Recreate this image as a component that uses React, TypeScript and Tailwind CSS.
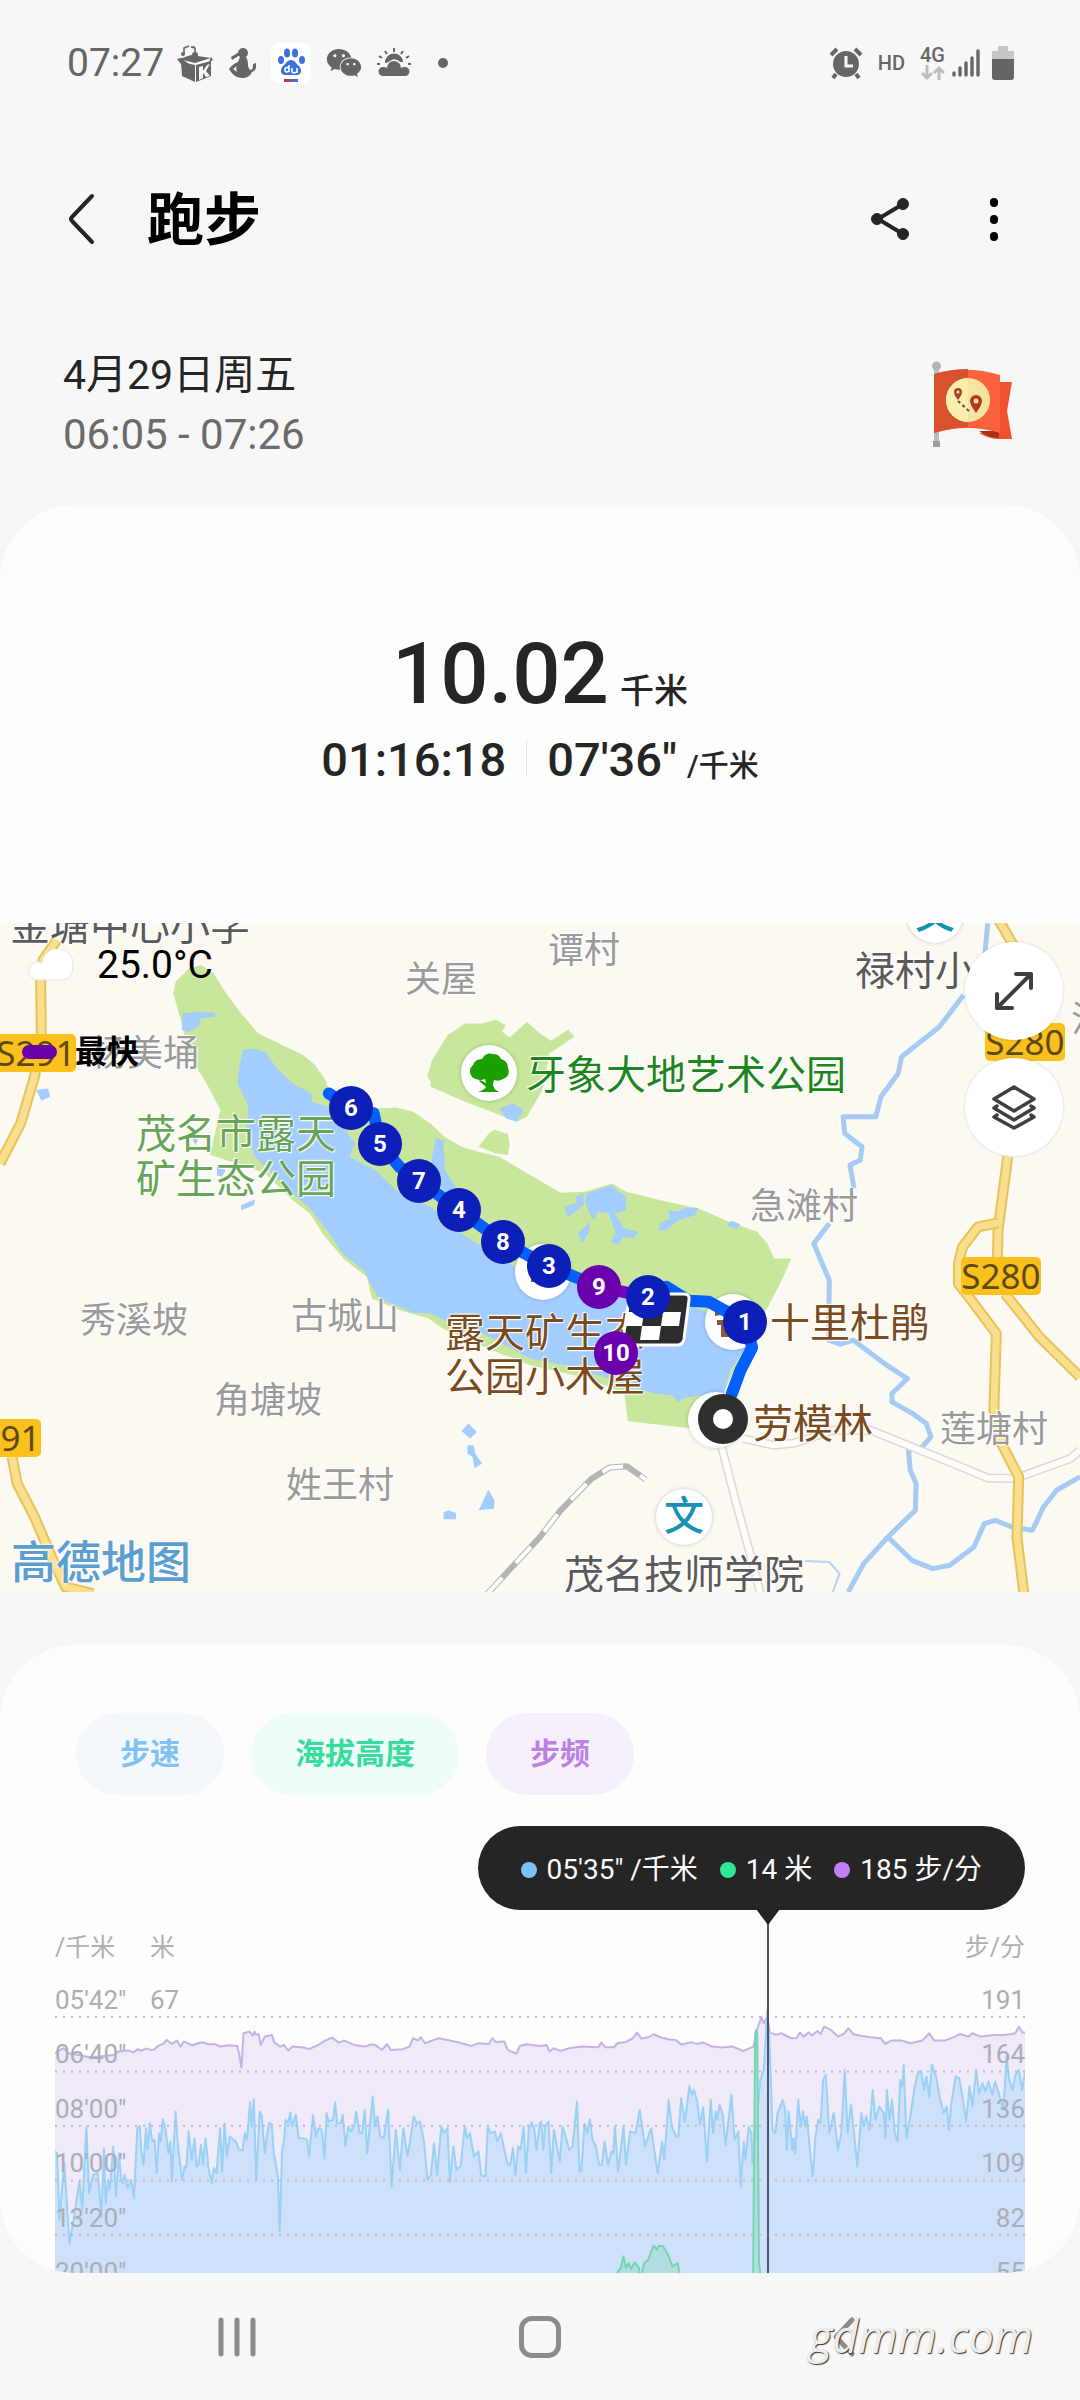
import { FaWeixin } from "react-icons/fa"

const UI_FONT = "font-['Roboto','Noto_Sans_CJK_SC',sans-serif]"

/* ---------- map data ---------- */

const labelTone = {
  village: "text-[36px] text-[#9a9a9a]",
  school: "text-[40px] text-[#5a5a5a]",
  park: "text-[40px] text-[#68a557]",
  garden: "text-[40px] text-[#1d851d]",
  poi: "text-[40px] text-[#7a4a20]",
}

const mapLabels: { text: string; x: number; y: number; tone: keyof typeof labelTone }[] = [
  { text: "金塘中心小学", x: 10, y: 2, tone: "school" },
  { text: "关屋", x: 405, y: 55, tone: "village" },
  { text: "谭村", x: 548, y: 26, tone: "village" },
  { text: "禄村小", x: 855, y: 47, tone: "school" },
  { text: "杨美埇", x: 91, y: 129, tone: "village" },
  { text: "洪", x: 1071, y: 95, tone: "village" },
  { text: "牙象大地艺术公园", x: 526, y: 151, tone: "garden" },
  { text: "茂名市露天", x: 136, y: 210, tone: "park" },
  { text: "矿生态公园", x: 136, y: 255, tone: "park" },
  { text: "急滩村", x: 750, y: 282, tone: "village" },
  { text: "秀溪坡", x: 80, y: 396, tone: "village" },
  { text: "古城山", x: 291, y: 392, tone: "village" },
  { text: "角塘坡", x: 214, y: 476, tone: "village" },
  { text: "姓王村", x: 286, y: 561, tone: "village" },
  { text: "露天矿生态", x: 445, y: 409, tone: "poi" },
  { text: "公园小木屋", x: 445, y: 453, tone: "poi" },
  { text: "十里杜鹃", x: 770, y: 399, tone: "poi" },
  { text: "劳模林", x: 753, y: 500, tone: "poi" },
  { text: "莲塘村", x: 940, y: 505, tone: "village" },
  { text: "茂名技师学院", x: 564, y: 651, tone: "school" },
]

const roadBadges = [
  { text: "S291", x: 36, y: 130 },
  { text: "S280", x: 1025, y: 119 },
  { text: "S280", x: 1001, y: 353 },
  { text: "S291", x: 1, y: 515 },
]

const kmMarkers = [
  { km: 3, x: 549, y: 343 },
  { km: 8, x: 503, y: 319 },
  { km: 4, x: 459, y: 287 },
  { km: 7, x: 419, y: 258 },
  { km: 5, x: 380, y: 221 },
  { km: 6, x: 351, y: 185 },
  { km: 9, x: 599, y: 364, fast: true },
  { km: 2, x: 648, y: 374 },
  { km: 1, x: 745, y: 399 },
  { km: 10, x: 616, y: 430, fast: true },
]

const greens = [
  "503,250 510,215 550,175 585,165 620,190 650,240 700,310 750,370 830,410 880,435 915,465 945,510 960,560 1000,580 1095,595 1150,592 1200,605 1250,640 1290,680 1340,710 1390,725 1450,740 1568,812 1628,848 1698,845 1778,820 1818,845 1918,870 2028,895 2118,935 2198,965 2228,1000 2248,1045 2298,1045 2270,1110 2230,1190 2170,1290 2100,1450 2080,1550 1998,1553 1823,1533 1813,1450 1770,1430 1690,1400 1540,1365 1430,1320 1285,1255 1245,1225 1160,1200 1080,1165 1065,1100 1000,1048 940,975 900,910 850,870 770,790 720,770 610,735 640,600 600,520 570,470 540,400 525,330",
  "1240,500 1255,450 1300,375 1350,340 1400,340 1440,328 1468,345 1458,365 1480,382 1530,335 1568,370 1600,392 1650,358 1668,380 1595,430 1575,540 1530,620 1500,635 1440,610 1350,575 1250,530 1250,512",
  "1418,672 1435,658 1475,672 1480,705 1475,735 1440,730 1390,710",
]

const waters = [
  "705,420 730,415 770,425 800,470 850,520 905,550 905,575 950,590 990,640 1030,700 1015,740 1090,780 1150,840 1250,890 1340,970 1460,1050 1568,1110 1640,1110 1740,1150 1818,1165 2008,1190 2180,1240 2168,1310 2120,1380 2100,1460 2040,1455 1980,1465 1970,1475 1950,1455 1900,1450 1820,1425 1668,1370 1540,1345 1440,1290 1400,1270 1290,1230 1250,1210 1200,1208 1100,1165 1075,1120 1060,1085 995,1030 950,960 900,895 850,850 790,790 740,740 715,660 722,590 690,520 695,470",
  "530,310 575,305 625,308 625,320 582,325 578,350 545,366 528,358",
  "105,540 140,535 146,560 120,571",
  "555,680 580,675 568,706",
  "630,770 655,780 645,800 630,795",
  "700,885 740,868 738,885 700,900",
  "1265,685 1288,690 1292,780 1325,835 1295,850 1250,790 1255,740",
  "1450,595 1490,580 1520,600 1500,635 1470,625",
  "1703,850 1773,825 1818,860 1818,900 1785,910 1813,955 1853,965 1840,985 1810,980 1795,1003 1773,995 1788,970 1768,910 1735,905 1725,930 1715,915 1700,880",
  "1638,890 1675,878 1672,858 1695,850 1695,885 1650,920",
  "1678,970 1713,935 1713,960 1690,1000",
  "1940,900 1965,905 1990,893 2028,893 2018,915 1968,930 1935,960 1912,962 1918,938 1945,925",
  "2112,945 2125,932 2150,942 2138,957",
  "1340,1562 1360,1540 1385,1565 1365,1585",
  "1357,1605 1375,1605 1380,1630 1400,1660 1378,1674 1372,1640 1357,1630",
  "1418,1738 1436,1770 1434,1795 1390,1800",
  "1288,1806 1302,1800 1324,1808 1324,1827 1288,1827",
]

const rivers = [
  "2868,40 2860,130",
  "2798,255 2728,350 2618,440 2608,490 2558,560 2543,620 2448,620 2453,670 2503,710 2498,750 2468,765 2480,835",
  "2408,940 2363,1000 2383,1050 2408,1110 2406,1290 2440,1302 2478,1290 2568,1360 2635,1405 2590,1450 2590,1475 2650,1510 2690,1540 2703,1580 2678,1610 2638,1620 2643,1680 2660,1720 2658,1800 2578,1880 2508,1960 2463,2045",
  "2578,1880 2648,1950 2708,1975 2758,1965 2828,1910 2858,1840 2890,1830 2938,1850 2998,1860 3030,1790 3068,1740 3136,1700",
]

const yellowRoads = [
  "165,90 125,150 118,210 120,380 100,500 60,640 0,760",
  "35,1640 50,1720 100,1820 150,1940 190,2030 270,2050",
  "2900,30 2945,110",
  "2926,740 2898,960 2896,1060",
  "2898,938 2840,950 2795,1010 2783,1060 2783,1120 2813,1160 2893,1270 2886,1500 2908,1600 2958,1700 2953,1880 2973,2050",
  "2918,1150 3018,1280 3136,1400",
]

const whiteRoads = [
  "2158,1585 2248,1605 2308,1598 2420,1560 2528,1560 2648,1610 2768,1660 2868,1703 2948,1705 3108,1645 3136,1620",
  "2093,1600 2138,1780 2178,1930 2208,2050",
]

const railway = "1415,2050 1568,1880 1628,1800 1718,1705 1770,1672 1820,1668 1875,1708"
const route =
  "955,550 1020,594 1085,610 1104,702 1160,770 1218,812 1333,900 1461,995 1593,1068 1740,1130"
const routeEnd = "1883,1145 1935,1130 2000,1172 2058,1175 2164,1235 2184,1312 2150,1380 2125,1450"

/* ---------- chart data ---------- */

const cadence =
  "161,400 185,385 200,400 230,405 260,412 290,410 330,405 345,395 370,392 390,397 400,388 412,392 425,386 440,390 450,388 460,378 475,372 485,360 500,372 515,362 525,380 535,365 560,376 575,370 590,368 610,374 625,372 640,380 665,376 690,378 695,400 702,443 708,340 725,335 735,347 740,335 745,345 752,342 758,375 770,350 790,345 798,368 815,380 825,375 838,392 850,380 880,383 900,387 925,375 945,362 965,353 985,368 1000,362 1030,375 1060,380 1075,374 1090,375 1110,390 1125,372 1135,390 1170,388 1190,380 1200,355 1215,362 1222,352 1235,370 1255,362 1275,355 1300,360 1330,367 1370,378 1390,370 1420,372 1430,355 1440,366 1465,365 1475,390 1500,402 1510,378 1530,373 1568,378 1588,375 1596,395 1608,385 1628,393 1653,385 1688,380 1738,382 1746,368 1758,382 1783,382 1793,370 1818,366 1838,355 1850,338 1863,356 1883,352 1898,343 1918,352 1943,359 1963,360 1978,374 2008,367 2023,372 2043,368 2068,380 2098,383 2128,380 2158,393 2188,380 2198,330 2211,292 2218,310 2228,290 2236,338 2253,345 2268,340 2298,355 2313,355 2323,338 2333,350 2348,338 2358,347 2373,333 2383,342 2393,320 2413,330 2433,350 2450,342 2463,325 2478,343 2503,348 2528,352 2558,355 2570,372 2588,362 2618,362 2643,370 2678,362 2698,340 2713,362 2743,362 2773,350 2788,342 2813,350 2823,340 2848,350 2888,345 2918,345 2948,340 2958,320 2968,338 2976,338"

const pace =
  "161,695 167,700 174,900 188,730 203,972 215,900 232,785 240,870 252,622 260,820 272,765 285,760 296,890 303,685 308,850 315,780 320,810 330,680 338,830 347,700 352,770 358,790 363,765 372,805 382,780 390,835 400,625 407,618 412,700 418,735 425,625 430,690 436,610 443,665 450,660 456,760 463,640 468,665 474,598 482,630 490,700 496,665 500,785 511,575 518,680 530,780 537,740 542,745 549,635 558,720 566,655 572,740 577,735 585,675 590,735 598,655 607,750 616,790 622,745 630,760 640,625 646,755 653,610 660,710 668,650 685,665 695,690 705,692 712,640 718,660 727,548 732,620 738,540 745,780 755,575 761,590 770,700 776,650 782,610 790,612 796,700 808,770 813,935 820,695 826,660 830,600 838,610 844,578 849,620 860,585 868,655 880,655 892,660 898,710 910,585 918,650 925,625 935,630 943,715 949,580 955,605 968,600 974,548 980,610 990,610 996,585 1004,680 1012,620 1020,635 1030,615 1035,575 1045,640 1052,640 1060,570 1067,700 1083,530 1090,620 1097,590 1105,650 1115,655 1128,570 1138,800 1150,630 1162,750 1172,625 1184,710 1192,660 1202,590 1212,612 1220,605 1232,665 1242,780 1252,765 1261,670 1270,765 1282,620 1290,640 1300,625 1307,785 1317,680 1326,750 1338,740 1350,620 1357,655 1365,640 1377,710 1390,695 1398,768 1410,770 1417,620 1425,640 1437,635 1445,665 1455,640 1465,690 1475,735 1482,735 1490,685 1497,765 1505,680 1512,690 1521,620 1528,760 1536,625 1545,608 1552,630 1558,690 1568,610 1572,605 1578,690 1583,620 1593,605 1601,760 1609,630 1626,725 1634,620 1643,650 1653,690 1663,680 1676,545 1683,755 1688,755 1698,612 1706,640 1713,598 1721,660 1731,680 1740,735 1748,735 1756,665 1766,735 1775,695 1781,700 1786,620 1795,755 1803,690 1811,620 1818,735 1830,635 1846,640 1858,570 1873,680 1891,625 1910,760 1923,665 1929,720 1942,540 1951,620 1963,650 1970,650 1978,535 1989,605 2002,498 2009,525 2015,510 2025,545 2033,615 2042,562 2053,725 2064,540 2071,640 2078,575 2083,600 2090,555 2099,585 2107,675 2118,580 2124,525 2133,660 2144,635 2151,800 2160,665 2165,720 2174,620 2182,640 2185,730 2198,600 2208,480 2218,450 2228,270 2236,400 2243,630 2251,640 2258,580 2273,540 2280,570 2285,690 2290,575 2301,690 2304,655 2309,700 2318,540 2325,620 2332,575 2338,620 2343,590 2348,650 2360,770 2368,650 2376,600 2383,610 2390,480 2398,465 2408,640 2421,580 2433,690 2443,640 2453,450 2461,640 2471,555 2478,620 2489,740 2501,580 2508,620 2515,590 2525,630 2534,510 2542,600 2553,560 2566,580 2571,655 2575,510 2583,600 2590,540 2598,640 2606,665 2614,480 2620,500 2624,435 2632,655 2643,590 2656,500 2666,455 2675,455 2683,510 2690,470 2698,530 2706,435 2718,470 2728,530 2740,580 2749,560 2755,630 2763,545 2775,470 2785,475 2793,520 2805,605 2815,500 2824,560 2834,450 2843,520 2853,490 2861,515 2870,485 2881,525 2889,485 2903,530 2913,570 2923,410 2930,480 2940,510 2948,465 2958,450 2968,510 2976,455"

const altitude = [
  "1790,1062 1803,1045 1811,1010 1818,1045 1826,1030 1833,1048 1843,1028 1856,1045 1856,1062",
  "1863,1062 1871,1030 1883,1020 1898,978 1908,990 1913,978 1925,980 1938,1000 1953,1040 1968,1030 1974,1062",
  "2187,1062 2193,340 2196,330 2199,340 2204,1030 2208,1062",
]

const gridLines = [291, 455, 618, 782, 945]

const axisRows = [
  { pace: "05'42\"", alt: "67", steps: "191" },
  { pace: "06'40\"", steps: "164" },
  { pace: "08'00\"", steps: "136" },
  { pace: "10'00\"", steps: "109" },
  { pace: "13'20\"", steps: "82" },
  { pace: "20'00\"", steps: "55" },
]

/* ---------- status bar ---------- */

function StatusBar() {
  return (
    <div className="flex h-[126px] items-center pl-[67px] pr-[66px] text-[#666]">
      <span className="text-[39px] leading-[40px]">07:27</span>
      <div className="ml-[13px] flex items-center gap-[15px]">
        <svg viewBox="0 0 36 38" className="h-[38px] w-[36px]" fill="currentColor">
          <path d="M2 15 14 11l20 3-16 5z" />
          <path d="M4 18 18 21v17L5 32z" />
          <path d="m19 21 15-4v15l-15 6z" />
          <path d="m0 15 4-1 8 6-5 4zM34 13l2 3-4 2z" />
          <path d="m22 23 4-1v5l4-6 3-1-4 7 4 5-4 1-3-4v5l-4 2z" fill="#f7f7f7" />
          <path d="M7 10V4l5-2M18 11V4l-4-1 4 0" stroke="currentColor" strokeWidth="1.6" fill="none" />
          <circle cx="6" cy="10" r="2" />
          <circle cx="18" cy="11" r="3" />
        </svg>
        <svg viewBox="0 0 28 32" className="h-[32px] w-[28px]" fill="currentColor">
          <circle cx="15" cy="6" r="5" />
          <path d="M3 10 11 5l1 3-8 5z" />
          <path
            fillRule="evenodd"
            d="M12 10h6c2 3 2 6 2 9 1 3 2 4 3 4 2-1 2-3 2-6l3-1c1 5-1 8-4 9-2 4-5 6-10 6C8 31 4 27 1 22c2-3 6-6 9-7zM5 22l4 3c-1-3-1-5 0-6z"
          />
        </svg>
        <svg viewBox="0 0 40 40" className="h-[40px] w-[40px]">
          <rect width="40" height="40" rx="7" fill="#fff" />
          <g fill="#3c6fe0">
            <ellipse cx="16" cy="10" rx="3" ry="4.500" />
            <ellipse cx="24" cy="10" rx="3" ry="4.500" />
            <ellipse cx="10" cy="17" rx="3" ry="4" />
            <ellipse cx="31" cy="17" rx="3" ry="4" />
            <path d="M20 17c4 0 5 4 8 6 3 3 3 9-2 9H14c-5 0-5-6-2-9 3-2 4-6 8-6z" />
          </g>
          <path
            d="M18 22v7m0-3a2 2 0 1 0-4 1 2 2 0 0 0 4 0m3-2v3q0 2 2 2t3-2v-3m0 0v5"
            fill="none"
            stroke="#fff"
            strokeWidth="1.600"
          />
          <path d="M13 36h7v3h-7z" fill="#c83848" />
          <path d="M20 36h7v3h-7z" fill="#3c6fe0" />
        </svg>
        <FaWeixin className="h-[36px] w-[36px]" />
        <svg viewBox="0 0 34 30" className="h-[30px] w-[34px]" fill="currentColor">
          <path d="M8 15a9 9 0 0 1 18-1l-3 0a7 7 0 0 0-10-1c-2 1-3 2-5 2z" />
          <path d="M6 28a4 4 0 0 1 0-9q3 0 4 1a7 7 0 0 1 14 0q1-1 4-1a4 4 0 0 1 0 9z" />
          <path
            d="M17 0v4M8 3l2 3M26 3l-2 3M2 8l3 2M32 8l-3 2M0 16h3M34 16h-3"
            stroke="currentColor"
            strokeWidth="2"
          />
        </svg>
        <span className="ml-[12px] h-[10px] w-[10px] rounded-full bg-[#666]" />
      </div>

      <div className="ml-auto flex items-center">
        <svg viewBox="0 0 34 34" className="h-[34px] w-[34px]" fill="currentColor">
          <circle cx="17" cy="18" r="13" />
          <path
            d="m2 9 6-6M32 9l-6-6M7 28l-3 4M27 28l3 4"
            stroke="currentColor"
            strokeWidth="4"
          />
          <path d="M17 10v10h7" fill="none" stroke="#f7f7f7" strokeWidth="3" />
        </svg>
        <span className="ml-[15px] text-[20px] leading-[20px] font-medium">HD</span>
        <div className="ml-[15px] flex flex-col items-center">
          <span className="text-[20px] leading-[20px] font-medium">4G</span>
          <svg viewBox="0 0 24 16" className="h-[16px] w-[24px]" stroke="#bdbdbd" strokeWidth="3" fill="none">
            <path d="M6 0v12M1 8l5 5 5-5M18 15V3M13 8l5-5 5 5" />
          </svg>
        </div>
        <svg viewBox="0 0 30 30" className="ml-[6px] h-[30px] w-[30px]" stroke="currentColor" strokeWidth="3.400" strokeLinecap="round">
          <path d="M3 25v2M9 20v7M15 15v12M21 10v17M27 3v24" />
        </svg>
        <svg viewBox="0 0 22 34" className="ml-[11px] h-[34px] w-[22px]">
          <path d="M6 0h10v5h6v9H0V5h6z" fill="#c6c6c6" />
          <path d="M0 13h22v18q0 3-3 3H3q-3 0-3-3z" fill="currentColor" />
        </svg>
      </div>
    </div>
  )
}

function Header() {
  return (
    <header className="flex h-[186px] items-center pr-[80px] pl-[62px]">
      <button aria-label="返回" className="h-[54px] w-[40px]">
        <svg viewBox="0 0 40 54" fill="none" stroke="#252525" strokeWidth="4" strokeLinecap="round" strokeLinejoin="round">
          <path d="M30 4 10 25q-2 2 0 4l20 21" />
        </svg>
      </button>
      <h1 className="ml-[45px] pt-[4px] text-[57px] leading-[64px] font-bold text-black">跑步</h1>
      <button aria-label="分享" className="ml-auto">
        <svg viewBox="0 0 40 44" className="h-[44px] w-[40px]" fill="#252525" stroke="#252525">
          <path d="M33 7 8 22l25 15" fill="none" strokeWidth="4" />
          <circle cx="33" cy="7" r="5.500" />
          <circle cx="7" cy="22" r="5.500" />
          <circle cx="33" cy="37" r="5.500" />
        </svg>
      </button>
      <button aria-label="更多" className="ml-[78px] flex w-[12px] flex-col items-center gap-[8px]">
        <span className="h-[9px] w-[8px] rounded-full bg-black" />
        <span className="h-[9px] w-[8px] rounded-full bg-black" />
        <span className="h-[9px] w-[8px] rounded-full bg-black" />
      </button>
    </header>
  )
}

function FlagBadge() {
  return (
    <svg viewBox="0 0 80 88" className="h-[88px] w-[80px]">
      <rect x="2" y="4" width="5" height="82" fill="#b9bdbd" />
      <circle cx="4.500" cy="5" r="4.500" fill="#b5b5b5" />
      <rect x="1" y="80" width="7" height="6" fill="#9a9d9d" />
      <path d="M47 72q10 6 20 6h13l-5-28 5-29H67v50z" fill="#f0512f" />
      <path d="M47 70q10 7 20 7V70z" fill="#a63218" />
      <path d="M2 13q33-9 66 1v58Q35 62 2 72z" fill="#fc6240" />
      <path d="M2 13q17-5 34-5v58q-17 1-34 6z" fill="#d9522f" />
      <circle cx="36" cy="39" r="22" fill="#f6e4a2" />
      <path d="M36 17a22 22 0 0 0 0 44z" fill="#fceeae" />
      <path d="M26 39q-4-5-4-8a4 4 0 0 1 8 0q0 3-4 8z" fill="#a8452a" />
      <circle cx="26" cy="31" r="1.500" fill="#fceeae" />
      <path d="M44 52q-6-8-6-12a6 6 0 0 1 12 0q0 4-6 12z" fill="#b03a1c" />
      <circle cx="44" cy="40" r="2.500" fill="#f6e4a2" />
      <path d="m26 40 12 11" stroke="#6d4a2a" strokeWidth="2" strokeDasharray="3 3" />
    </svg>
  )
}

/* ---------- map ---------- */

function MapTerrain() {
  return (
    <svg
      viewBox="0 39 3136 2006"
      preserveAspectRatio="none"
      className="block h-full w-full [&_polyline]:[vector-effect:non-scaling-stroke]"
      fill="none"
      strokeLinejoin="round"
    >
      <rect y="39" width="3136" height="2006" fill="#fcf9f3" />
      {greens.map((p) => (
        <polygon key={p} points={p} fill="#c8e69c" />
      ))}
      {waters.map((p) => (
        <polygon key={p} points={p} fill="#a3ccff" />
      ))}
      {rivers.map((p) => (
        <polyline key={p} points={p} stroke="#a6cbf5" strokeWidth="5" />
      ))}
      <polyline points="2338,1952 2408,1955 2438,1990 2418,2045" stroke="#b4d2f5" strokeWidth="2" />
      {whiteRoads.map((p) => (
        <g key={p}>
          <polyline points={p} stroke="#dcd9d4" strokeWidth="9" />
          <polyline points={p} stroke="#fdfcfa" strokeWidth="6" />
        </g>
      ))}
      <polyline points={railway} stroke="#b4b4b4" strokeWidth="6" />
      <polyline points={railway} stroke="#fff" strokeWidth="4" strokeDasharray="22 20" />
      {yellowRoads.map((p) => (
        <g key={p}>
          <polyline points={p} stroke="#e6c45c" strokeWidth="11" />
          <polyline points={p} stroke="#fae08e" strokeWidth="7" />
        </g>
      ))}
    </svg>
  )
}

function PoiDot({ x, y, children }: { x: number; y: number; children?: React.ReactNode }) {
  return (
    <span
      className="absolute flex h-[56px] w-[56px] -translate-x-1/2 -translate-y-1/2 items-center justify-center rounded-full bg-white text-[40px] leading-[40px] font-medium text-[#1690b4] shadow-[0_0_4px_rgba(0,0,0,0.2)]"
      style={{ left: `${x / 10.8}%`, top: y }}
    >
      {children}
    </span>
  )
}

function RouteMap() {
  return (
    <div className="relative h-[669px] w-full overflow-hidden">
      <MapTerrain />

      {roadBadges.map((badge) => (
        <span
          key={`${badge.x}-${badge.y}`}
          className="absolute flex h-[38px] w-[80px] -translate-x-1/2 -translate-y-1/2 items-center justify-center rounded-[5px] bg-[#fcc01c] font-['Noto_Sans'] text-[35px] leading-[38px] text-[#5c4a12]"
          style={{ left: `${badge.x / 10.8}%`, top: badge.y }}
        >
          {badge.text}
        </span>
      ))}

      <PoiDot x={489} y={150}>
        <svg viewBox="0 0 42 40" className="h-[40px] w-[42px]" fill="#1ca000">
          <path d="M8 26a8 8 0 0 1-3-14Q7 6 14 6q4-7 11-5 6 0 8 5 7 2 7 9 3 8-5 11-4 3-9 1l-1 4q0 5 6 8H10q6-2 8-5l-7-6 1-1 6 3-1-4q-5 2-9 0z" />
        </svg>
      </PoiDot>
      <PoiDot x={684} y={594}>文</PoiDot>
      <PoiDot x={935} y={-8}>文</PoiDot>
      <PoiDot x={543} y={349}>
        <svg viewBox="0 0 24 20" className="h-[20px] w-[24px]" fill="#8a5a32">
          <path d="M0 8 12 0l12 8v12h-8v-8H8v8H0z" />
        </svg>
      </PoiDot>
      <PoiDot x={733} y={399}>
        <svg viewBox="0 0 36 30" className="h-[30px] w-[36px]" fill="#8a5a32">
          <path d="M0 5 18 0v6L0 9zM2 13h18v5h-8v9h8v3H6V18H2z" />
        </svg>
      </PoiDot>
      <PoiDot x={716} y={497} />

      {mapLabels.map((label) => (
        <span
          key={label.text}
          className={`absolute -translate-y-1/2 pt-[3px] leading-[44px] whitespace-nowrap [text-shadow:0_0_2px_#fff,0_0_2px_#fff,1px_1px_1px_#fff,-1px_-1px_1px_#fff] ${labelTone[label.tone]}`}
          style={{ left: `${label.x / 10.8}%`, top: label.y }}
        >
          {label.text}
        </span>
      ))}

      {/* Route */}
      <svg
        viewBox="0 39 3136 2006"
        preserveAspectRatio="none"
        className="absolute inset-0 h-full w-full [&_polyline]:[vector-effect:non-scaling-stroke]"
        fill="none"
        strokeWidth="12"
        strokeLinecap="round"
        strokeLinejoin="round"
      >
        <polyline points={route} stroke="#0560fb" />
        <polyline points="1740,1130 1883,1161" stroke="#7a00c8" />
        <polyline points={routeEnd} stroke="#0560fb" />
      </svg>

      {/* Finish flag */}
      <svg
        viewBox="0 0 72 56"
        className="absolute top-[369px] left-[57.4%] h-[56px] w-[72px]"
      >
        <path d="M17 2h47q6 0 5 6l-5 39q-1 6-7 6H8q-6 0-5-6L9 8q1-6 8-6z" fill="#2d2d2d" stroke="#fff" strokeWidth="3" />
        <path d="M7 20h17l-2 14H5zM43 20h18l-2 14H41zM22 34h19l-2 14H20zM26 6h19l-2 14H24z" fill="#fff" />
      </svg>

      {kmMarkers.map((m) => (
        <span
          key={m.km}
          className={`absolute flex h-[44px] w-[44px] -translate-x-1/2 -translate-y-1/2 items-center justify-center rounded-full text-[24px] leading-[24px] font-bold text-white ${
            m.fast ? "bg-[#6a00ab]" : "bg-[#0c1fb8]"
          }`}
          style={{ left: `${m.x / 10.8}%`, top: m.y }}
        >
          {m.km}
        </span>
      ))}
      <span className="absolute top-[471px] left-[64.6%] h-[50px] w-[50px] rounded-full border-[15px] border-[#2f2f2f] bg-white" />

      {/* Weather and pace legend */}
      <svg viewBox="0 0 46 32" className="absolute top-[26px] left-[28px] h-[32px] w-[46px]">
        <path
          d="M10 31a9 9 0 1 1 4-17A15 15 0 0 1 45 16q0 15-12 15z"
          fill="#fff"
          stroke="#e6e2e2"
        />
      </svg>
      <span className="absolute top-[22px] left-[97px] text-[39px] leading-[40px] text-black">25.0°C</span>
      <span className="absolute top-[122px] left-[22px] h-[14px] w-[35px] rounded-full bg-[#6a00a8]" />
      <span className="absolute top-[109px] left-[75px] text-[32px] leading-[40px] font-bold text-black">最快</span>

      <span className="absolute top-[617px] left-[11px] text-[45px] leading-[48px] font-medium text-[#5a9fd0] [text-shadow:0_0_3px_#fff,0_0_3px_#fff]">
        高德地图
      </span>

      <div className="absolute top-[19px] right-[17px] flex flex-col gap-[18px]">
        <button
          aria-label="展开地图"
          className="flex h-[98px] w-[98px] items-center justify-center rounded-full bg-white shadow-[0_0_3px_rgba(0,0,0,0.15)]"
        >
          <svg viewBox="0 0 40 40" className="h-[40px] w-[40px]" fill="none" stroke="#3f3f3f" strokeWidth="4" strokeLinecap="round" strokeLinejoin="round">
            <path d="M3 37 37 3M22 3h15v14M3 23v14h15" />
          </svg>
        </button>
        <button
          aria-label="地图图层"
          className="flex h-[98px] w-[98px] items-center justify-center rounded-full bg-white shadow-[0_0_3px_rgba(0,0,0,0.15)]"
        >
          <svg viewBox="0 0 44 46" className="h-[46px] w-[44px]" fill="none" stroke="#3f3f3f" strokeWidth="3.500" strokeLinecap="round" strokeLinejoin="round">
            <path d="M22 3 42 15 22 27 2 15zM5 22l-3 2 20 12 20-12-3-2M5 31l-3 2 20 11 20-11-3-2" />
          </svg>
        </button>
      </div>
    </div>
  )
}

function SummaryCard() {
  return (
    <section className="rounded-t-[75px] bg-[#fdfdfd] pt-[127px]">
      <div className="flex items-baseline justify-center font-medium text-[#252525]">
        <span className="text-[85px] leading-[84px]">10.02</span>
        <span className="ml-[11px] text-[34px] leading-[34px]">千米</span>
      </div>
      <div className="mt-[20px] flex items-baseline justify-center pb-[139px] font-medium text-[#252525]">
        <span className="text-[47px] leading-[48px]">01:16:18</span>
        <span className="mx-[20px] h-[36px] w-px bg-[#e6e6e6]" />
        <span className="text-[47px] leading-[48px]">07'36"</span>
        <span className="ml-[10px] text-[30px] leading-[30px]">/千米</span>
      </div>
      <RouteMap />
    </section>
  )
}

/* ---------- chart ---------- */

function TooltipValue({ color, text }: { color: string; text: string }) {
  return (
    <span className="flex items-center gap-[10px]">
      <span className={`h-[16px] w-[16px] rounded-full ${color}`} />
      {text}
    </span>
  )
}

function PaceChart() {
  return (
    <div className="relative mt-[31px]">
      <div className="ml-auto flex h-[84px] w-fit items-center gap-[22px] rounded-[42px] bg-[#252525] px-[43px] pt-[3px] text-[28px] leading-[32px] text-[#fafafa]">
        <TooltipValue color="bg-[#78c3fa]" text={"05'35\" /千米"} />
        <TooltipValue color="bg-[#32e696]" text="14 米" />
        <TooltipValue color="bg-[#c47df5]" text="185 步/分" />
      </div>
      <svg
        viewBox="0 0 24 16"
        className="absolute top-[83px] left-[73.5%] z-10 h-[16px] w-[24px] -translate-x-1/2"
        fill="#252525"
      >
        <path d="M0 0h24L12 16z" />
      </svg>

      <div className="mt-[23px] flex h-[30px] items-center text-[25px] leading-[30px] text-[#b0b0b0]">
        <span className="w-[95px]">/千米</span>
        <span>米</span>
        <span className="ml-auto">步/分</span>
      </div>

      <div className="relative h-[310px] overflow-hidden">
        <svg
          viewBox="161 129 2815 931"
          preserveAspectRatio="none"
          className="block h-full w-full [&_*]:[vector-effect:non-scaling-stroke]"
          strokeWidth="2"
          strokeLinejoin="round"
        >
          <polygon points={`161,1060 ${cadence} 2976,1060`} fill="#efe9f8" />
          <polyline points={cadence} fill="none" stroke="#c6b2e6" />
          <polygon points={`161,1060 ${pace} 2976,1060`} fill="#cfe0fa" />
          <polyline points={pace} fill="none" stroke="#9ad1f7" />
          {altitude.map((p) => (
            <polyline key={p} points={p} fill="#a5dcd4" fillOpacity="0.7" stroke="#74d6b0" />
          ))}
          {gridLines.map((y) => (
            <line key={y} x1="161" x2="2976" y1={y} y2={y} stroke="#bcbcc6" strokeDasharray="2 6" />
          ))}
        </svg>
        <div className="absolute inset-x-0 top-0 grid h-[327px] grid-rows-6 text-[26px] leading-[26px] text-[#aaaeb6]">
          {axisRows.map((row) => (
            <div key={row.pace} className="flex items-end pb-[5px]">
              <span className="w-[95px]">{row.pace}</span>
              <span>{row.alt}</span>
              <span className="ml-auto">{row.steps}</span>
            </div>
          ))}
        </div>
      </div>
      <span className="absolute top-[97px] bottom-0 left-[73.5%] w-[2px] -translate-x-1/2 bg-[#4a5568]" />
    </div>
  )
}

function ChartCard() {
  return (
    <section className="mt-[53px] overflow-hidden rounded-[75px] bg-[#fdfdfd] px-[55px] pt-[68px]">
      <div className="flex gap-[27px] pl-[21px] text-[30px] leading-[82px] font-bold">
        <button className="rounded-[41px] bg-[#f4f8fd] px-[44px] text-[#80c2f2]">步速</button>
        <button className="rounded-[41px] bg-[#f0fcf8] px-[44px] text-[#38dc9c]">海拔高度</button>
        <button className="rounded-[41px] bg-[#f5f0fb] px-[44px] text-[#bb82e4]">步频</button>
      </div>
      <PaceChart />
    </section>
  )
}

function NavBar() {
  return (
    <nav className="relative flex h-[127px] items-center justify-between px-[216px] text-[#8c8c8c]">
      <button aria-label="最近任务" className="flex h-[42px] w-[42px] justify-center">
        <svg viewBox="0 0 42 42" fill="none" stroke="currentColor" strokeWidth="5" strokeLinecap="round">
          <path d="M5 4v34M21 4v34M37 4v34" />
        </svg>
      </button>
      <button aria-label="主屏幕" className="h-[42px] w-[42px] rounded-[13px] border-5 border-[#8c8c8c]" />
      <button aria-label="后退" className="flex h-[42px] w-[42px] justify-center">
        <svg viewBox="0 0 42 42" fill="none" stroke="currentColor" strokeWidth="5" strokeLinecap="round" strokeLinejoin="round">
          <path d="M30 4 14 21l16 17" />
        </svg>
      </button>
      <span className="absolute right-[47px] bottom-[38px] font-['Open_Sans'] text-[45px] leading-[52px] text-[#ededed] italic [text-shadow:1px_1px_1px_#333]">
        gdmm.com
      </span>
    </nav>
  )
}

export default function App() {
  return (
    <div className={`min-h-screen bg-[#f7f7f7] ${UI_FONT}`} lang="zh-CN">
      <StatusBar />
      <Header />
      <div className="flex items-center justify-between pt-[33px] pr-[68px] pb-[40px] pl-[63px]">
        <div>
          <p className="text-[41px] leading-[60px] text-[#252525]">4月29日周五</p>
          <p className="text-[42px] leading-[60px] text-[#6b6b6b]">06:05 - 07:26</p>
        </div>
        <FlagBadge />
      </div>
      <SummaryCard />
      <ChartCard />
      <NavBar />
    </div>
  )
}
